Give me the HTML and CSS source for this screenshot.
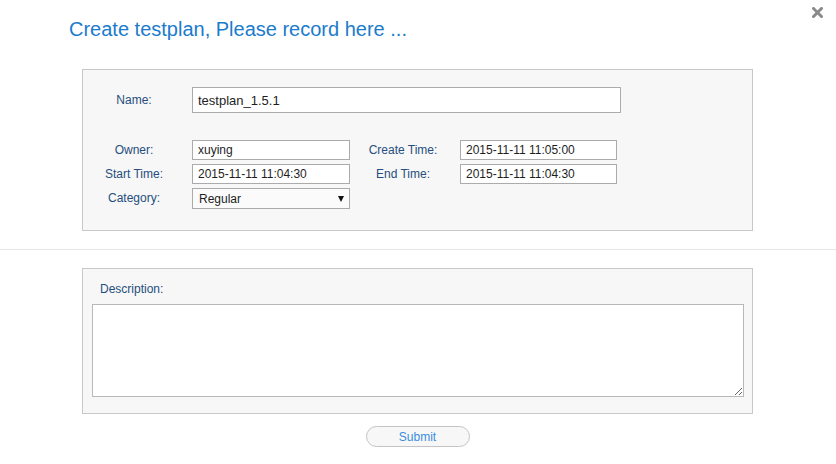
FILE: index.html
```html
<!DOCTYPE html>
<html>
<head>
<meta charset="utf-8">
<link rel="stylesheet" href="styles.css">
</head>
<body>
<div class="dialog">
  <a class="close" aria-label="close">
    <svg width="11" height="11" viewBox="0 0 11 11"><path d="M1.5 1.5 L9.5 9.5 M9.5 1.5 L1.5 9.5" stroke="#8a8a8a" stroke-width="3" stroke-linecap="square"/></svg>
  </a>
  <h1 class="title">Create testplan, Please record here ...</h1>

  <div class="panel panel-info">
    <div class="name-row">
      <label class="lbl lbl-first">Name:</label>
      <input class="field field-name" type="text" value="testplan_1.5.1">
    </div>
    <div class="grid">
      <label class="lbl lbl-first">Owner:</label>
      <input class="field" type="text" value="xuying">
      <label class="lbl lbl-second">Create Time:</label>
      <input class="field" type="text" value="2015-11-11 11:05:00">

      <label class="lbl lbl-first">Start Time:</label>
      <input class="field" type="text" value="2015-11-11 11:04:30">
      <label class="lbl lbl-second">End Time:</label>
      <input class="field" type="text" value="2015-11-11 11:04:30">

      <label class="lbl lbl-first">Category:</label>
      <span class="select-wrap">
        <select class="select">
          <option>Regular</option>
        </select>
      </span>
    </div>
  </div>

  <div class="divider"></div>

  <div class="panel panel-desc">
    <label class="lbl desc-lbl">Description:</label>
    <textarea class="desc"></textarea>
  </div>

  <div class="actions">
    <button class="submit" type="button">Submit</button>
  </div>
</div>
</body>
</html>
```

FILE: styles.css
```css
html, body {
  margin: 0;
  padding: 0;
  background: #ffffff;
  font-family: "Liberation Sans", Arial, sans-serif;
}

.dialog {
  position: relative;
  width: 836px;
  height: 464px;
}

.close {
  position: absolute;
  top: 7px;
  left: 812px;
  width: 11px;
  height: 11px;
  display: block;
}
.close svg { display: block; }

.title {
  margin: 0;
  padding: 17px 0 0 69px;
  font-size: 20px;
  line-height: 24px;
  font-weight: normal;
  color: #1b7bcc;
}

.panel {
  box-sizing: border-box;
  width: 671px;
  margin-left: 82px;
  background: #f7f7f7;
  border: 1px solid #c8c8c8;
}

.panel-info {
  margin-top: 28px;
  height: 162px;
  padding: 17px 0 0 7px;
}

.lbl {
  font-size: 12px;
  line-height: 15px;
  color: #264e7d;
  text-align: center;
  align-self: center;
}

.lbl-first {
  box-sizing: border-box;
  width: 102px;
  padding-right: 14px;
}

.lbl-second {
  box-sizing: border-box;
  width: 110px;
  padding-right: 4px;
}

.name-row {
  display: flex;
  align-items: center;
  margin-bottom: 27px;
}

.field {
  box-sizing: border-box;
  height: 20px;
  margin: 0;
  padding: 0 5px;
  border: 1px solid #ababab;
  background: #ffffff;
  font-family: "Liberation Sans", Arial, sans-serif;
  font-size: 12px;
  color: #1e1e1e;
  outline: none;
}

.field-name {
  width: 429px;
  height: 26px;
  font-size: 13px;
}

.grid {
  display: grid;
  grid-template-columns: 102px 158px 110px 157px;
  grid-auto-rows: 20px;
  row-gap: 4px;
}

.grid .field {
  width: 100%;
}

.select-wrap {
  position: relative;
  display: block;
  height: 21px;
}

.select-wrap::after {
  content: "";
  position: absolute;
  right: 6px;
  top: 8px;
  border-left: 3.5px solid transparent;
  border-right: 3.5px solid transparent;
  border-top: 6px solid #111;
  pointer-events: none;
}

.select {
  box-sizing: border-box;
  width: 158px;
  height: 21px;
  margin: 0;
  padding: 0 0 0 6px;
  border: 1px solid #ababab;
  border-radius: 0;
  background: #fbfbfb;
  font-family: "Liberation Sans", Arial, sans-serif;
  font-size: 12px;
  color: #1e1e1e;
  -webkit-appearance: none;
  appearance: none;
  outline: none;
}

.divider {
  margin-top: 18px;
  height: 1px;
  background: #e6e6e6;
}

.panel-desc {
  margin-top: 18px;
  padding: 13px 8px 16px 9px;
}

.desc-lbl {
  display: block;
  text-align: left;
  padding-left: 8px;
  margin-bottom: 7px;
}

.desc {
  display: block;
  box-sizing: border-box;
  width: 652px;
  height: 93px;
  margin: 0;
  border: 1px solid #b8b8b8;
  background: #ffffff;
  outline: none;
}

.actions {
  display: flex;
  justify-content: center;
  padding-top: 12px;
  padding-left: 0;
}

.submit {
  box-sizing: border-box;
  width: 104px;
  height: 21px;
  margin-left: -1px;
  padding: 0;
  border: 1px solid #c4c4c4;
  border-radius: 11px;
  background: #f7f7f7;
  font-family: "Liberation Sans", Arial, sans-serif;
  font-size: 12px;
  color: #3a8ee0;
  cursor: pointer;
}
```
